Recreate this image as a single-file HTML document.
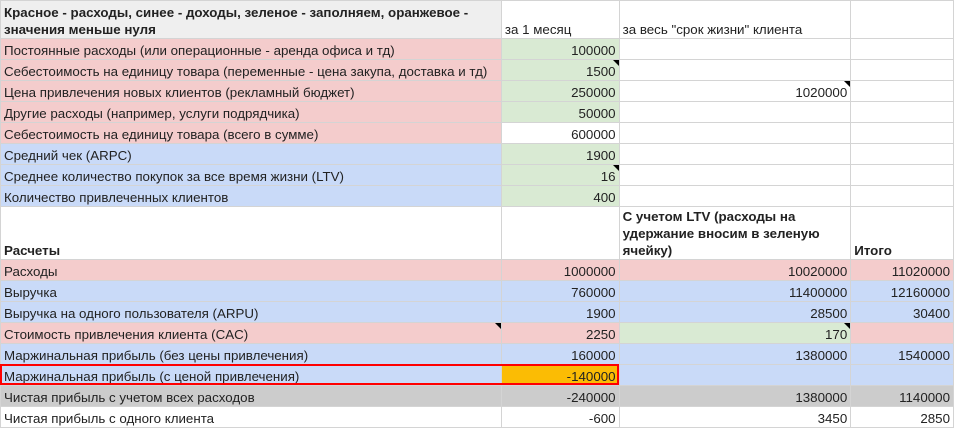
<!DOCTYPE html>
<html><head><meta charset="utf-8"><style>
body{margin:0;background:#fff;width:954px;height:431px;overflow:hidden;font-family:"Liberation Sans",Arial,sans-serif;font-size:13.33px;color:#222}
table{border-collapse:collapse;table-layout:fixed;position:absolute;left:0;top:0}
td{border:1px solid #d4d4d4;padding:0 3px;height:20px;white-space:nowrap;overflow:hidden;vertical-align:bottom;line-height:16px;position:relative}
td.n{text-align:right}
.r{background:#f4cccc}.g{background:#d9ead3}.b{background:#c9daf8}.o{background:#fbbc04}.y{background:#cccccc}.h{background:#efefef}
.w{white-space:normal;line-height:17px !important}
.bold{font-weight:bold}
.t::after{content:"";position:absolute;right:0;top:0;border-top:6px solid #000;border-left:6px solid transparent}
.box{position:absolute;left:0;top:364px;width:615px;height:17px;border:2px solid #f00}
</style></head><body>
<table>
<colgroup><col style="width:501px"><col style="width:118px"><col style="width:232px"><col style="width:103px"></colgroup>
<tr style="height:38px"><td class="h bold w" style="height:37px">Красное - расходы, синее - доходы, зеленое - заполняем, оранжевое - значения меньше нуля</td><td>за 1 месяц</td><td>за весь "срок жизни" клиента</td><td></td></tr>
<tr><td class="r">Постоянные расходы (или операционные - аренда офиса и тд)</td><td class="g n">100000</td><td></td><td></td></tr>
<tr><td class="r">Себестоимость на единицу товара (переменные - цена закупа, доставка и тд)</td><td class="g n t">1500</td><td></td><td></td></tr>
<tr><td class="r">Цена привлечения новых клиентов (рекламный бюджет)</td><td class="g n">250000</td><td class="n t">1020000</td><td></td></tr>
<tr><td class="r">Другие расходы (например, услуги подрядчика)</td><td class="g n">50000</td><td></td><td></td></tr>
<tr><td class="r">Себестоимость на единицу товара (всего в сумме)</td><td class="n">600000</td><td></td><td></td></tr>
<tr><td class="b">Средний чек (ARPC)</td><td class="g n">1900</td><td></td><td></td></tr>
<tr><td class="b">Среднее количество покупок за все время жизни (LTV)</td><td class="g n t">16</td><td></td><td></td></tr>
<tr><td class="b">Количество привлеченных клиентов</td><td class="g n">400</td><td></td><td></td></tr>
<tr style="height:53px"><td class="bold" style="height:52px">Расчеты</td><td></td><td class="bold w">С учетом LTV (расходы на удержание вносим в зеленую ячейку)</td><td class="bold">Итого</td></tr>
<tr><td class="r">Расходы</td><td class="r n">1000000</td><td class="r n">10020000</td><td class="r n">11020000</td></tr>
<tr><td class="b">Выручка</td><td class="b n">760000</td><td class="b n">11400000</td><td class="b n">12160000</td></tr>
<tr><td class="b">Выручка на одного пользователя (ARPU)</td><td class="b n">1900</td><td class="b n">28500</td><td class="b n">30400</td></tr>
<tr><td class="r t">Стоимость привлечения клиента (CAC)</td><td class="r n">2250</td><td class="g n t">170</td><td class="r"></td></tr>
<tr><td class="b">Маржинальная прибыль (без цены привлечения)</td><td class="b n">160000</td><td class="b n">1380000</td><td class="b n">1540000</td></tr>
<tr><td class="b">Маржинальная прибыль (с ценой привлечения)</td><td class="o n">-140000</td><td class="b"></td><td class="b"></td></tr>
<tr><td class="y">Чистая прибыль с учетом всех расходов</td><td class="y n">-240000</td><td class="y n">1380000</td><td class="y n">1140000</td></tr>
<tr><td>Чистая прибыль с одного клиента</td><td class="n">-600</td><td class="n">3450</td><td class="n">2850</td></tr>
</table>
<div class="box"></div>
</body></html>
